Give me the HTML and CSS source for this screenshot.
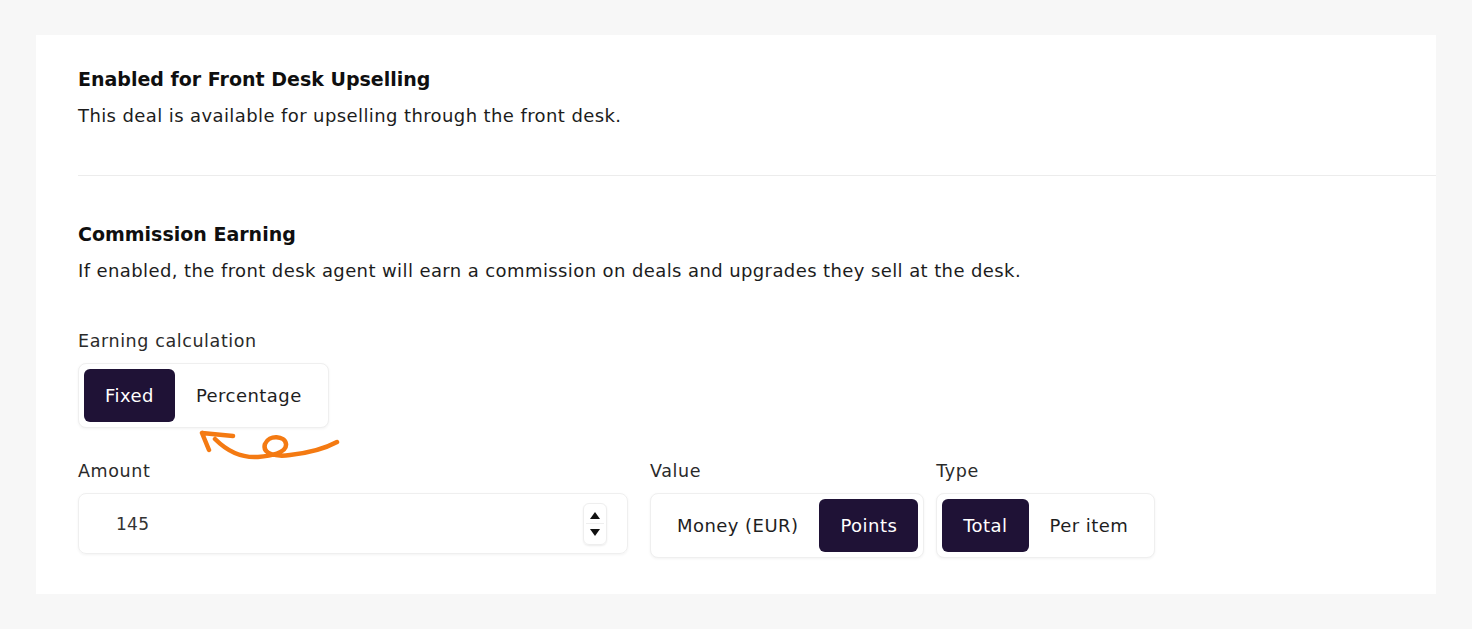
FILE: index.html
```html
<!DOCTYPE html>
<html lang="en">
<head>
    <meta charset="UTF-8" />
    <meta name="viewport" content="width=device-width, initial-scale=1.0" />
    <title>Front Desk Settings</title>
    <link rel="stylesheet" href="styles.css">
</head>
<body>
    <div class="card">
        <div class="section">
            <h2>Enabled for Front Desk Upselling</h2>
            <p>This deal is available for upselling through the front desk.</p>
        </div>

        <div class="section last">
            <h2>Commission Earning</h2>
            <p>If enabled, the front desk agent will earn a commission on deals and upgrades they sell at the desk.</p>

            <div class="field calc">
                <label>Earning calculation</label>
                <div class="segmented">
                    <button class="active">Fixed</button>
                    <button>Percentage</button>
                </div>
                <!-- hand drawn hint arrow -->
                <svg class="hint-arrow" width="146" height="40" viewBox="0 0 146 40">
                    <path d="M4 5 L35 8 M4 5 L11 22 M17 11 C 30 24, 45 30, 60 29 C 72 28, 89 25, 88 16 C 87 8, 71 6, 67 16 C 64 26, 78 29, 92 27 C 110 25, 128 20, 139 14"
                          fill="none" stroke="#f47a12" stroke-width="4.5" stroke-linecap="round" stroke-linejoin="round"/>
                </svg>
            </div>

            <div class="row">
                <div class="field amount">
                    <label>Amount</label>
                    <div class="number-input">
                        <span class="value">145</span>
                        <span class="spinner">
                            <span class="up"></span>
                            <span class="down"></span>
                        </span>
                    </div>
                </div>
                <div class="field">
                    <label>Value</label>
                    <div class="segmented">
                        <button>Money (EUR)</button>
                        <button class="active">Points</button>
                    </div>
                </div>
                <div class="field">
                    <label>Type</label>
                    <div class="segmented">
                        <button class="active">Total</button>
                        <button>Per item</button>
                    </div>
                </div>
            </div>
        </div>
    </div>
</body>
</html>
```

FILE: styles.css
```css
body {
    margin: 0;
    padding: 35px 36px;
    background-color: #f7f7f7;
    font-family: 'DejaVu Sans', 'Noto Sans', sans-serif;
    letter-spacing: 0.3px;
    color: #151515;
}

.card {
    background: white;
    height: 559px;
    box-sizing: border-box;
    padding: 32px 0 37px 42px;
}

.section {
    padding-bottom: 46px;
    border-bottom: 1px solid #ececec;
    margin-bottom: 46px;
}

.section.last {
    border-bottom: none;
    margin-bottom: 0;
    padding-bottom: 0;
}

h2 {
    margin: 0;
    font-size: 19px;
    line-height: 24px;
    font-weight: 700;
    letter-spacing: 0;
    color: #0f0f0f;
}

p {
    margin: 12px 0 0;
    font-size: 18px;
    line-height: 26px;
    letter-spacing: 0.4px;
    color: #1c1c1c;
}

.field {
    display: flex;
    flex-direction: column;
}

.field label {
    font-size: 17.5px;
    line-height: 22px;
    letter-spacing: 0.6px;
    color: #2a2a2a;
    margin-bottom: 11px;
}

.calc {
    margin-top: 46px;
    position: relative;
    align-items: flex-start;
}

.hint-arrow {
    position: absolute;
    left: 120px;
    top: 98px;
}

.segmented {
    display: flex;
    align-self: flex-start;
    padding: 5px;
    border: 1px solid #efefef;
    border-radius: 8px;
    box-shadow: 0 1px 3px rgba(0,0,0,0.05);
    background: white;
}

.segmented button {
    height: 53px;
    padding: 0 21px;
    border: none;
    border-radius: 6px;
    background: transparent;
    font-family: inherit;
    font-size: 18px;
    letter-spacing: 0.45px;
    color: #1e1e1e;
    cursor: pointer;
}

.segmented button.active {
    background-color: #1f1236;
    color: white;
}

.row {
    display: flex;
    gap: 12px;
    margin-top: 32px;
}

.amount {
    width: 550px;
    margin-right: 10px;
}

.number-input {
    display: flex;
    align-items: center;
    justify-content: space-between;
    height: 61px;
    box-sizing: border-box;
    padding: 0 20px 0 37px;
    border: 1px solid #efefef;
    border-radius: 8px;
    box-shadow: 0 1px 3px rgba(0,0,0,0.05);
    font-size: 17px;
    color: #333;
}

.spinner {
    display: flex;
    flex-direction: column;
    justify-content: center;
    align-items: center;
    width: 22px;
    height: 40px;
    border: 1px solid #eee;
    border-radius: 6px;
    box-shadow: 0 1px 2px rgba(0,0,0,0.08);
}

.spinner .up,
.spinner .down {
    width: 0;
    height: 0;
    border-left: 5px solid transparent;
    border-right: 5px solid transparent;
}

.spinner .up {
    border-bottom: 7px solid #111;
    margin-bottom: 5px;
}

.spinner .down {
    border-top: 7px solid #111;
    margin-top: 5px;
    position: relative;
}

.spinner .down::before {
    content: "";
    position: absolute;
    left: -9px;
    top: -13px;
    width: 18px;
    border-top: 1px solid #eee;
}
```
